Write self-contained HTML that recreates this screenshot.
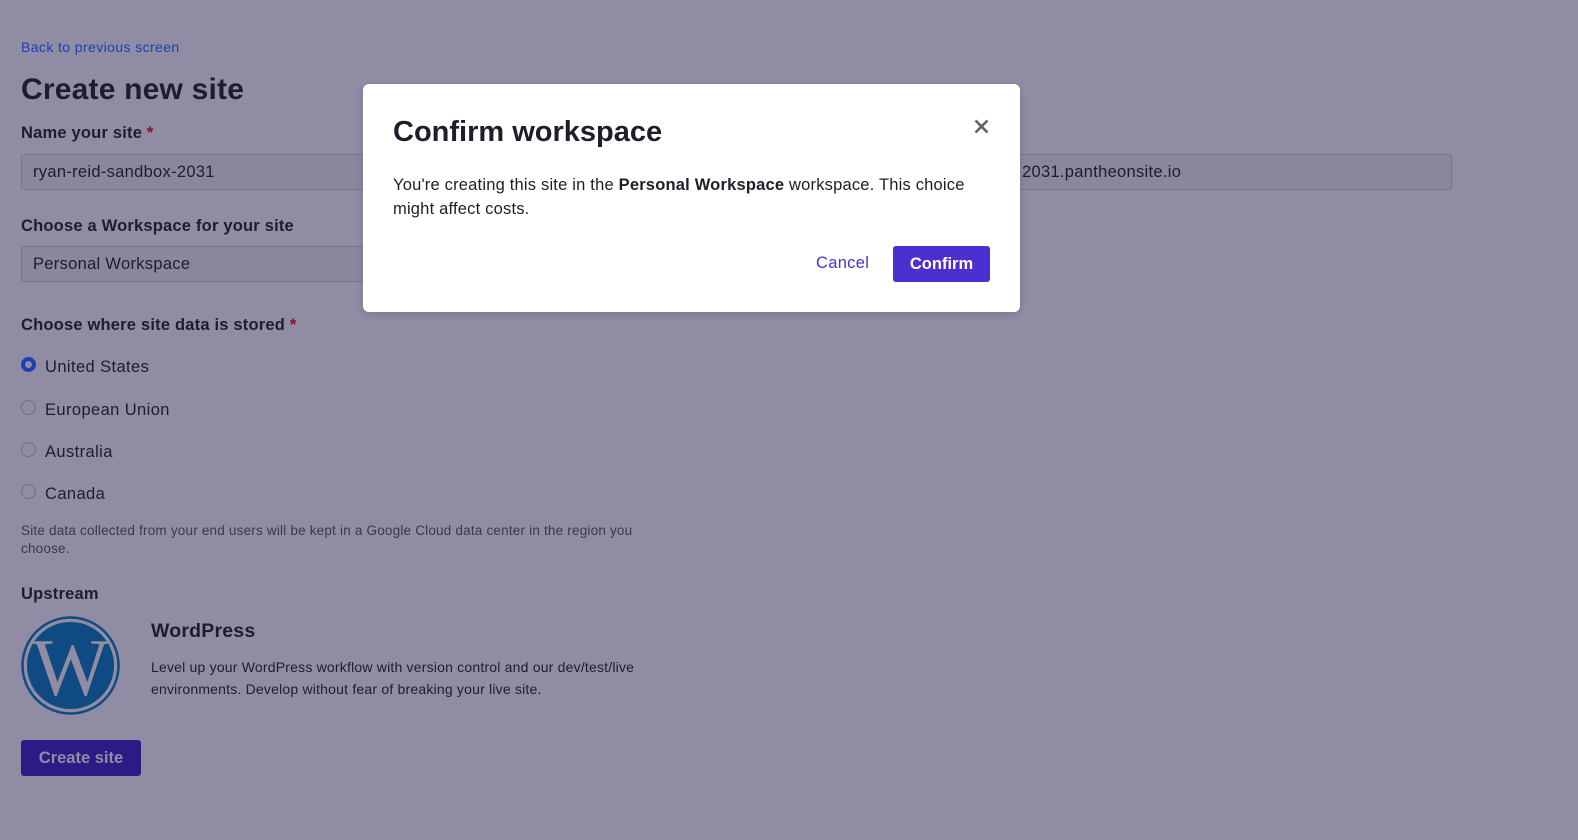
<!DOCTYPE html>
<html><head><style>
*{box-sizing:border-box;margin:0;padding:0}
body{width:1578px;height:840px;background:#8f8ca3;font-family:"Liberation Sans",sans-serif;color:#1e1b33;position:relative;overflow:hidden}
.a{position:absolute;white-space:nowrap}
.lbl{font-weight:bold;font-size:16.5px;color:#1e1b33;letter-spacing:.2px}
.inp{position:absolute;border:1px solid #79768c;background:#8a879d;border-radius:3px;height:36px;font-size:16.5px;padding:8px 11px;color:#1e1b33;letter-spacing:.3px}
.radio{position:absolute;left:21px;width:15px;height:15px;border:1.5px solid #6f6c82;border-radius:50%}
.rl{font-size:16.5px;left:45px;letter-spacing:.4px}
.modal{position:absolute;left:363px;top:84px;width:657px;height:228px;background:#fff;border-radius:6px;box-shadow:0 2px 8px rgba(0,0,0,.15)}
</style></head><body>
<div class="a" style="left:21px;top:39px;font-size:14px;color:#1d3fb0;letter-spacing:.4px">Back to previous screen</div>
<div class="a" style="left:21px;top:73px;font-size:30px;font-weight:bold;letter-spacing:.2px">Create new site</div>
<div class="a lbl" style="left:21px;top:124px">Name your site <span style="color:#8a1020">*</span></div>
<div class="inp" style="left:21px;top:154px;width:1431px">ryan-reid-sandbox-2031<span style="position:absolute;left:1000px">2031.pantheonsite.io</span></div>
<div class="a lbl" style="left:21px;top:217px">Choose a Workspace for your site</div>
<div class="inp" style="left:21px;top:246px;width:500px">Personal Workspace</div>
<div class="a lbl" style="left:21px;top:316px">Choose where site data is stored <span style="color:#8a1020">*</span></div>
<div class="radio" style="top:357px;border:4px solid #1d3fb0"></div><div class="a rl" style="top:358px">United States</div>
<div class="radio" style="top:400px"></div><div class="a rl" style="top:401px">European Union</div>
<div class="radio" style="top:442px"></div><div class="a rl" style="top:443px">Australia</div>
<div class="radio" style="top:484px"></div><div class="a rl" style="top:485px">Canada</div>
<div class="a" style="left:21px;top:522px;font-size:13.5px;line-height:18px;color:#3a3750;white-space:normal;width:640px;letter-spacing:.2px">Site data collected from your end users will be kept in a Google Cloud data center in the region you choose.</div>
<div class="a lbl" style="left:21px;top:585px">Upstream</div>
<svg class="a" style="left:21px;top:616px" width="99" height="99" viewBox="0 0 100 100">
<circle cx="50" cy="50" r="48.5" fill="none" stroke="#0f4a82" stroke-width="2.5"/>
<circle cx="50" cy="50" r="44" fill="#0f4a82"/>
<text x="50" y="80" text-anchor="middle" font-family="Liberation Serif,serif" font-size="82" fill="#8f8ca3">W</text>
</svg>
<div class="a" style="left:151px;top:620px;font-size:19.5px;font-weight:bold;letter-spacing:.2px">WordPress</div>
<div class="a" style="left:151px;top:656px;font-size:14px;line-height:22px;white-space:normal;width:520px;letter-spacing:.2px">Level up your WordPress workflow with version control and our dev/test/live environments. Develop without fear of breaking your live site.</div>
<div class="a" style="left:21px;top:740px;width:120px;height:36px;background:#2e1a87;border-radius:3px;color:#8f8ca3;font-weight:bold;font-size:16.5px;text-align:center;line-height:36px">Create site</div>
<div class="modal">
<div class="a" style="left:30px;top:32px;font-size:29px;font-weight:bold;color:#1e1e2a">Confirm workspace</div>
<svg class="a" style="left:611px;top:35px" width="15" height="15" viewBox="0 0 15 15"><path d="M1.5 1.5L13.5 13.5M13.5 1.5L1.5 13.5" stroke="#5f6168" stroke-width="2.6"/></svg>
<div class="a" style="left:30px;top:89px;width:600px;white-space:normal;font-size:16.5px;line-height:24px;color:#1e1e2a;letter-spacing:.2px">You're creating this site in the <b>Personal Workspace</b> workspace. This choice might affect costs.</div>
<div class="a" style="left:453px;top:170px;font-size:16.5px;color:#4b2fd0;letter-spacing:.3px">Cancel</div>
<div class="a" style="left:530px;top:162px;width:97px;height:36px;background:#4b2fd0;border-radius:3px;color:#fff;font-weight:bold;font-size:16.5px;text-align:center;line-height:36px">Confirm</div>
</div>
</body></html>
